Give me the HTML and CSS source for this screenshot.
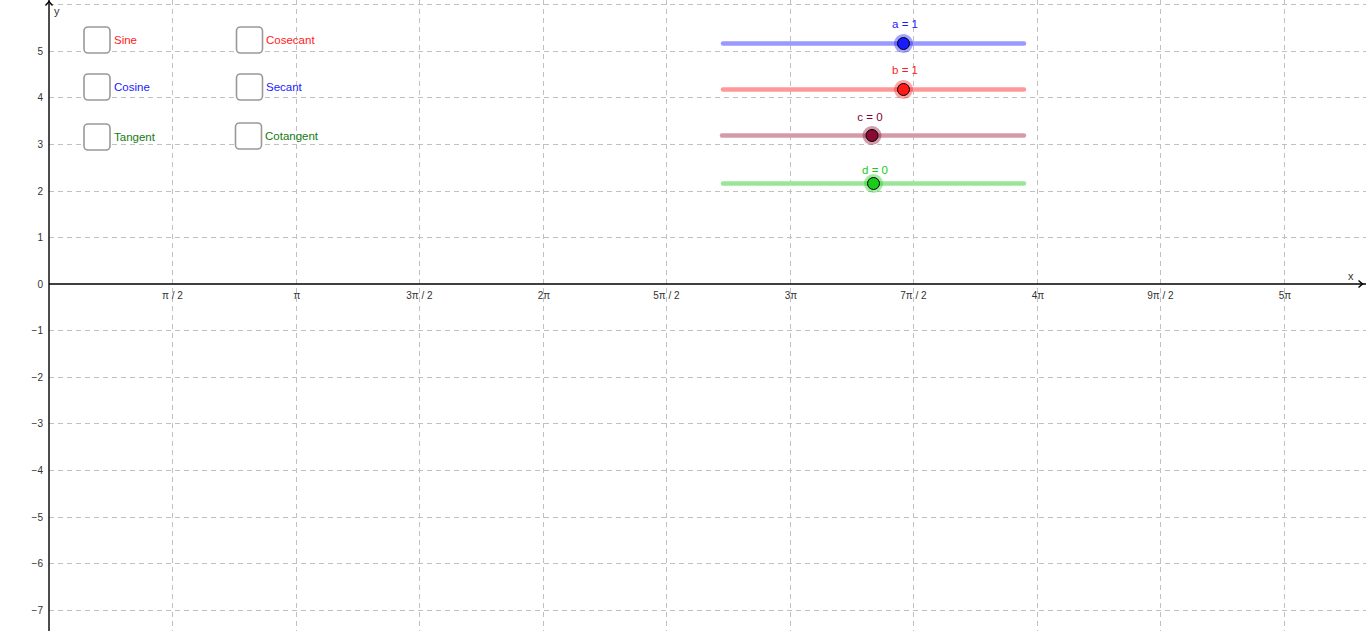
FILE: index.html
```html
<!DOCTYPE html>
<html>
<head>
<meta charset="utf-8">
<link rel="stylesheet" href="styles.css">
</head>
<body>
<div class="view">
<svg class="graph" width="1366" height="631" viewBox="0 0 1366 631" xmlns="http://www.w3.org/2000/svg">
  <g class="grid">
    <line x1="49" y1="4.5" x2="1366" y2="4.5"/>
    <line x1="49" y1="51.5" x2="1366" y2="51.5"/>
    <line x1="49" y1="97.5" x2="1366" y2="97.5"/>
    <line x1="49" y1="144.5" x2="1366" y2="144.5"/>
    <line x1="49" y1="191.5" x2="1366" y2="191.5"/>
    <line x1="49" y1="237.5" x2="1366" y2="237.5"/>
    <line x1="49" y1="330.5" x2="1366" y2="330.5"/>
    <line x1="49" y1="377.5" x2="1366" y2="377.5"/>
    <line x1="49" y1="423.5" x2="1366" y2="423.5"/>
    <line x1="49" y1="470.5" x2="1366" y2="470.5"/>
    <line x1="49" y1="517.5" x2="1366" y2="517.5"/>
    <line x1="49" y1="563.5" x2="1366" y2="563.5"/>
    <line x1="49" y1="610.5" x2="1366" y2="610.5"/>
    <line x1="172.5" y1="0" x2="172.5" y2="631"/>
    <line x1="296.5" y1="0" x2="296.5" y2="631"/>
    <line x1="419.5" y1="0" x2="419.5" y2="631"/>
    <line x1="543.5" y1="0" x2="543.5" y2="631"/>
    <line x1="666.5" y1="0" x2="666.5" y2="631"/>
    <line x1="790.5" y1="0" x2="790.5" y2="631"/>
    <line x1="913.5" y1="0" x2="913.5" y2="631"/>
    <line x1="1037.5" y1="0" x2="1037.5" y2="631"/>
    <line x1="1160.5" y1="0" x2="1160.5" y2="631"/>
    <line x1="1284.5" y1="0" x2="1284.5" y2="631"/>
  </g>

  <g class="axes">
    <line x1="49" y1="0" x2="49" y2="631"/>
    <line x1="49" y1="284" x2="1366" y2="284"/>
    <polyline points="45.5,5.5 49,1.5 52.5,5.5"/>
    <polyline points="1358.5,280.5 1362.5,284 1358.5,287.5"/>
  </g>
  <text class="axis-name" x="54" y="15">y</text>
  <text class="axis-name" x="1348" y="280">x</text>

  <g class="ylabels">
    <text x="43" y="55">5</text>
    <text x="43" y="101">4</text>
    <text x="43" y="148">3</text>
    <text x="43" y="195">2</text>
    <text x="43" y="241">1</text>
    <text x="43" y="288">0</text>
    <text x="43" y="334">−1</text>
    <text x="43" y="381">−2</text>
    <text x="43" y="427">−3</text>
    <text x="43" y="474">−4</text>
    <text x="43" y="521">−5</text>
    <text x="43" y="567">−6</text>
    <text x="43" y="614">−7</text>
  </g>

  <g class="xlabels">
    <text x="172.5" y="299">π / 2</text>
    <text x="297" y="299">π</text>
    <text x="419.5" y="299">3π / 2</text>
    <text x="544" y="299">2π</text>
    <text x="666.5" y="299">5π / 2</text>
    <text x="791" y="299">3π</text>
    <text x="913.5" y="299">7π / 2</text>
    <text x="1038" y="299">4π</text>
    <text x="1160.5" y="299">9π / 2</text>
    <text x="1285" y="299">5π</text>
  </g>

  <g class="checks">
    <rect class="box" x="84" y="27" width="26" height="26" rx="4"/>
    <text class="lbl sine" x="114" y="44">Sine</text>
    <rect class="box" x="84" y="74" width="26" height="26" rx="4"/>
    <text class="lbl cos" x="114" y="91">Cosine</text>
    <rect class="box" x="84" y="124" width="26" height="26" rx="4"/>
    <text class="lbl tan" x="114" y="141">Tangent</text>
    <rect class="box" x="236.5" y="27" width="26" height="26" rx="4"/>
    <text class="lbl sine" x="266" y="44">Cosecant</text>
    <rect class="box" x="236.5" y="74" width="26" height="26" rx="4"/>
    <text class="lbl cos" x="266" y="91">Secant</text>
    <rect class="box" x="235.5" y="123" width="26" height="26" rx="4"/>
    <text class="lbl tan" x="265" y="140">Cotangent</text>
  </g>

  <g class="slider">
    <line class="track ta" x1="723" y1="43.5" x2="1024" y2="43.5"/>
    <circle class="halo pa" cx="903.5" cy="43.5" r="9.5"/>
    <circle class="knob pa" cx="903.5" cy="43.5" r="6"/>
    <text class="sval va" x="905" y="28">a = 1</text>

    <line class="track tb" x1="723" y1="89.5" x2="1024" y2="89.5"/>
    <circle class="halo pb" cx="903.5" cy="89.5" r="9.5"/>
    <circle class="knob pb" cx="903.5" cy="89.5" r="6"/>
    <text class="sval vb" x="905" y="74">b = 1</text>

    <line class="track tc" x1="722" y1="135.5" x2="1024" y2="135.5"/>
    <circle class="halo pc" cx="872" cy="135.5" r="9.5"/>
    <circle class="knob pc" cx="872" cy="135.5" r="6"/>
    <text class="sval vc" x="870" y="121">c = 0</text>

    <line class="track td" x1="723" y1="183.5" x2="1024" y2="183.5"/>
    <circle class="halo pd" cx="873.5" cy="183.5" r="9.5"/>
    <circle class="knob pd" cx="873.5" cy="183.5" r="6"/>
    <text class="sval vd" x="875" y="174">d = 0</text>
  </g>
</svg>
</div>
</body>
</html>
```

FILE: styles.css
```css
html, body {
  margin: 0;
  padding: 0;
  background: #ffffff;
  overflow: hidden;
}

.view {
  width: 1366px;
  height: 631px;
}

.graph {
  display: block;
  font-family: "Liberation Sans", Arial, sans-serif;
}

.grid line {
  stroke: #c0c0c0;
  stroke-width: 1;
  stroke-dasharray: 5 4;
}

.axes line,
.axes polyline {
  stroke: #000000;
  stroke-width: 1.4;
  fill: none;
}

.axis-name {
  font-size: 11px;
  fill: #333333;
}

.ylabels text {
  font-size: 10px;
  fill: #333333;
  text-anchor: end;
}

.xlabels text {
  font-size: 10px;
  fill: #333333;
  text-anchor: middle;
}

.box {
  fill: #ffffff;
  stroke: #999999;
  stroke-width: 1.6;
}

.lbl {
  font-size: 11.5px;
}

.sine { fill: #ff1a1a; }
.cos { fill: #1a1aff; }
.tan { fill: #157a15; }

.track {
  stroke-width: 4.5;
  stroke-linecap: round;
}

.ta { stroke: #9999ff; }
.tb { stroke: #ff9999; }
.tc { stroke: #d59aaa; }
.td { stroke: #99e699; }

.halo { opacity: 0.4; }
.knob {
  stroke: #000000;
  stroke-width: 1;
}

.pa { fill: #1a1aff; }
.pb { fill: #ff1a1a; }
.pc { fill: #8b0a32; }
.pd { fill: #1acc1a; }

.sval {
  font-size: 11.5px;
  text-anchor: middle;
}

.va { fill: #1a1aff; }
.vb { fill: #ff1a1a; }
.vc { fill: #800030; }
.vd { fill: #1acc1a; }
```
